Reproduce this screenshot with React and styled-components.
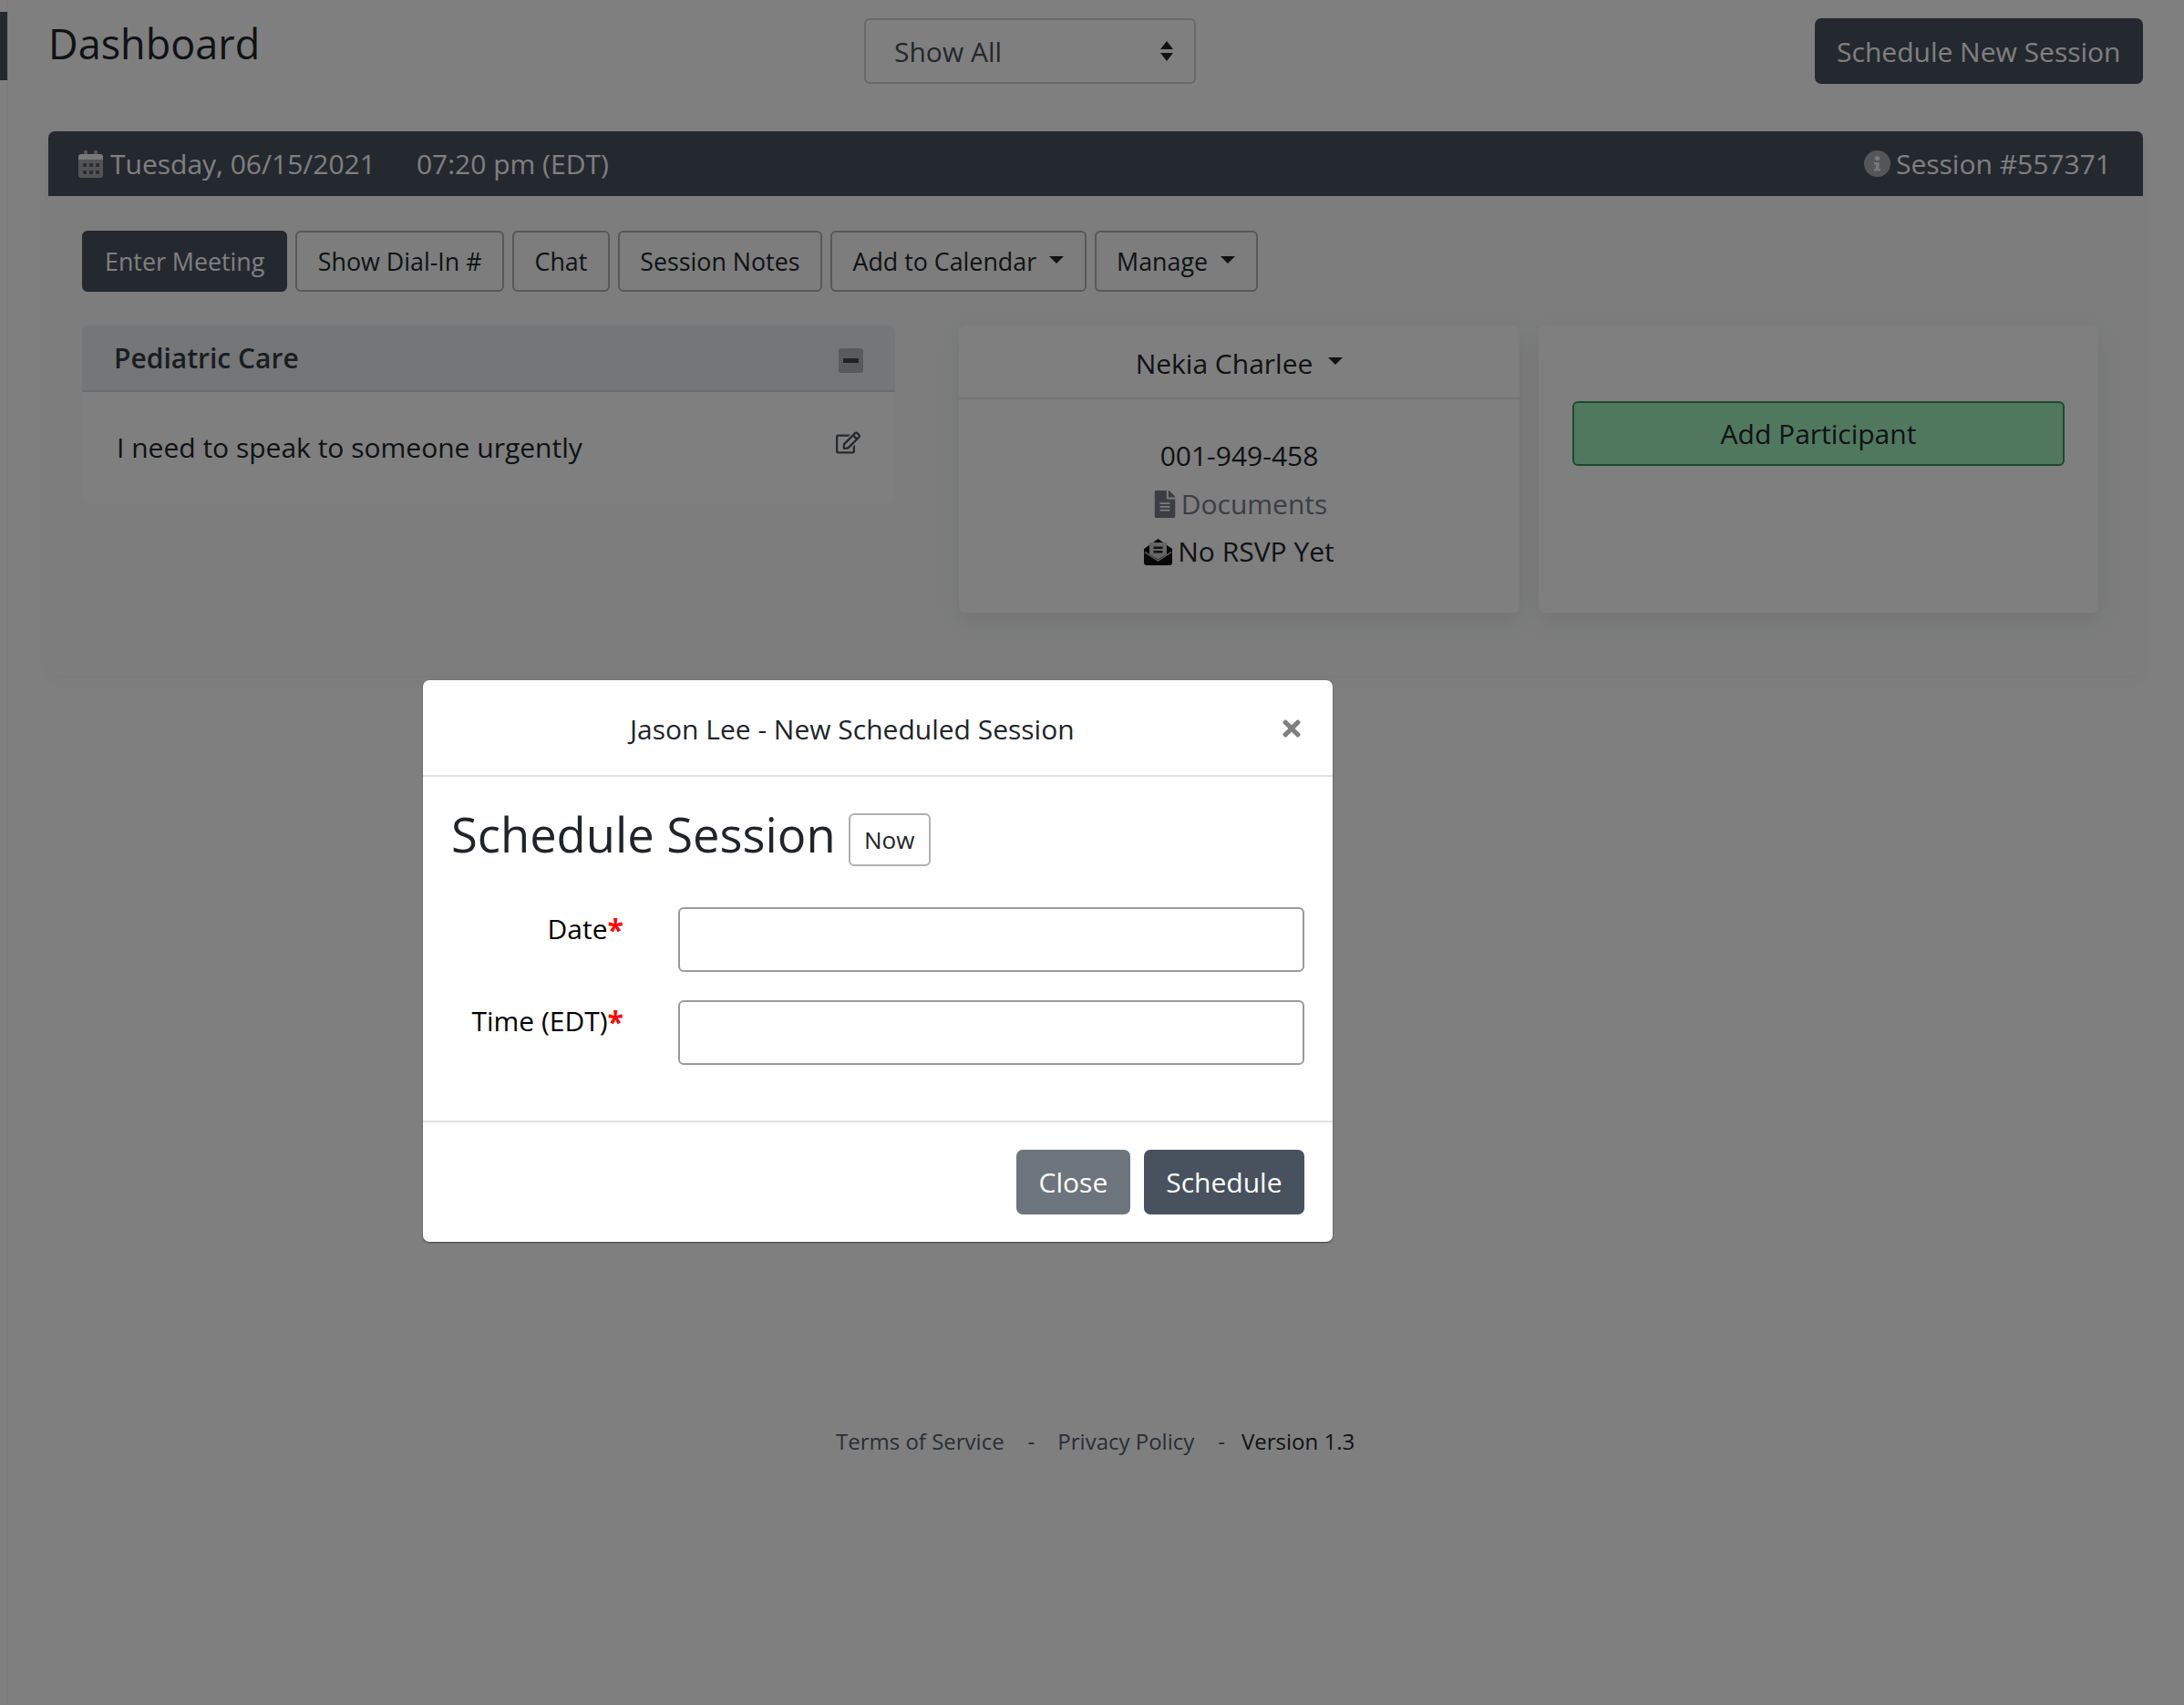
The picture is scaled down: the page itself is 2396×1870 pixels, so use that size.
import React from "react";
import styled, { createGlobalStyle } from "styled-components";
import { FaRegEdit, FaFileAlt, FaTimes } from "react-icons/fa";

const Global = createGlobalStyle`
  html, body { margin: 0; padding: 0; background: #fff; }
  body { font-family: "Open Sans", "Noto Sans", sans-serif; font-size: 28px; color: #212529; }
  * { box-sizing: border-box; }
`;

const Page = styled.div`
  position: relative;
  width: 2396px;
  height: 1870px;
  overflow: hidden;
  display: flex;
`;
const Sidebar = styled.aside`
  width: 9px;
  flex: none;
  border-right: 1px solid #f4f4f4;
  padding-top: 13px;
`;
const SideMark = styled.div`
  width: 8px;
  height: 75px;
  background: #48515e;
`;
const Main = styled.main`
  flex: 1;
  padding: 20px 44px 0 44px;
  display: flex;
  flex-direction: column;
`;
const TopBar = styled.header`
  display: grid;
  grid-template-columns: 895px 364px 1fr;
  height: 72px;
  align-items: start;
`;
const Title = styled.h1`
  margin: 0;
  font-size: 45px;
  line-height: 56px;
  font-weight: 400;
`;
const SelectBox = styled.div`
  height: 72px;
  border: 2px solid #ced4da;
  border-radius: 6px;
  display: flex;
  align-items: center;
  justify-content: space-between;
  padding: 0 23px 0 31px;
  color: #495057;
  font-size: 30px;
`;
const PrimaryBtn = styled.button`
  font: inherit;
  font-size: ${p => p.$size || 30}px;
  height: ${p => p.$h || 72}px;
  padding: 0 24.5px;
  background: #48515e;
  color: #fff;
  border: 0;
  border-radius: 7px;
  white-space: nowrap;
`;
const TopRight = styled.div`
  display: flex;
  justify-content: flex-end;
  margin-right: 1px;
`;
const Session = styled.section`
  margin-top: 52px;
  margin-right: 1px;
  background: #f8fbf9;
  border-radius: 7px;
  box-shadow: 0 4px 16px rgba(0, 0, 0, 0.06);
  height: 597px;
`;
const SessionHead = styled.div`
  height: 71px;
  background: #48515e;
  border-radius: 7px 7px 0 0;
  color: #fff;
  display: flex;
  align-items: center;
  justify-content: space-between;
  padding: 0 35px 0 33px;
  font-size: 30px;
`;
const HeadGroup = styled.div`
  display: flex;
  align-items: center;
  gap: ${p => p.$gap || 0}px;
`;
const HeadIcon = styled.span`
  display: inline-flex;
  margin-right: ${p => p.$mr || 6}px;
`;
const SessionBody = styled.div`
  padding: 38px 37px 0;
`;
const Toolbar = styled.div`
  display: flex;
  gap: 9px;
`;
const ToolBtn = styled.button`
  font: inherit;
  font-size: 26.8px;
  height: 67px;
  padding: 0 ${p => (p.$active ? 23 : 22.5)}px;
  border-radius: 6px;
  border: 2px solid ${p => (p.$active ? "#48515e" : "#aeb1b3")};
  background: ${p => (p.$active ? "#48515e" : "transparent")};
  color: ${p => (p.$active ? "#fff" : "#212529")};
  display: inline-flex;
  align-items: center;
  white-space: nowrap;
`;
const Caret = styled.span`
  display: inline-block;
  margin-left: ${p => p.$ml || 14}px;
  margin-top: -4px;
  border-top: 8px solid #212529;
  border-left: 8px solid transparent;
  border-right: 8px solid transparent;
`;
const Panels = styled.div`
  margin-top: 37px;
  display: flex;
  align-items: flex-start;
`;
const Panel = styled.div`
  background: #fff;
  border-radius: 7px;
  box-shadow: ${p => (p.$shadow ? "0 8px 26px rgba(0,0,0,0.08)" : "none")};
  width: ${p => p.$w}px;
  height: ${p => p.$h}px;
  margin-left: ${p => p.$ml || 0}px;
  flex: none;
`;
const TopicHead = styled.div`
  height: 73px;
  background: #e8ecf0;
  border-radius: 7px 7px 0 0;
  border-bottom: 2px solid #d5d8de;
  display: flex;
  align-items: center;
  justify-content: space-between;
  padding: 0 35px 0 35px;
  font-size: 30px;
  font-weight: 600;
  color: #343a40;
`;
const MinusWrap = styled.span`
  display: inline-flex;
  margin-top: 6px;
`;
const TopicBody = styled.div`
  display: flex;
  justify-content: space-between;
  align-items: flex-start;
  padding: 40px 38px 0 38px;
  font-size: 30px;
  color: #212529;
`;
const EditIcon = styled.span`
  display: inline-flex;
  margin-top: 2px;
`;
const PersonHead = styled.div`
  height: 81px;
  padding-top: 3px;
  border-bottom: 2px solid #e8e8e8;
  display: flex;
  align-items: center;
  justify-content: center;
  font-size: 30px;
`;
const PersonBody = styled.div`
  padding-top: 36px;
  display: flex;
  flex-direction: column;
  align-items: center;
  font-size: 30px;
  line-height: 52.5px;
`;
const InfoLine = styled.div`
  display: flex;
  align-items: center;
  gap: ${p => p.$gap || 7}px;
  color: ${p => p.$color || "#212529"};
`;
const AddWrap = styled.div`
  padding: 83px 37px 0;
`;
const AddBtn = styled.button`
  font: inherit;
  font-size: 30px;
  width: 100%;
  height: 71px;
  background: #a0f0be;
  border: 2px solid #3a9458;
  border-radius: 6px;
  color: #212529;
`;
const Footer = styled.footer`
  margin-top: 823px;
  padding-left: 864px;
  font-size: 24px;
  display: flex;
  white-space: pre;
  color: #212529;
`;
const FooterLink = styled.span`
  color: #525c6a;
`;
const Sep = styled.span`
  color: #48515e;
  margin: 0 ${p => p.$r}px 0 ${p => p.$l}px;
`;
const Overlay = styled.div`
  position: absolute;
  inset: 0;
  background: rgba(0, 0, 0, 0.5);
  padding: 746px 0 0 464px;
`;
const Modal = styled.div`
  width: 998px;
  height: 616px;
  background: #fff;
  border-radius: 7px;
  box-shadow: 0 1px 2px rgba(0, 0, 0, 0.5);
  display: flex;
  flex-direction: column;
`;
const ModalHead = styled.div`
  height: 106px;
  flex: none;
  border-bottom: 2px solid #dee2e6;
  display: flex;
  align-items: center;
  justify-content: space-between;
  padding: 2px 31px 0 227px;
  font-size: 30px;
`;
const CloseX = styled.span`
  display: inline-flex;
  color: #808080;
`;
const ModalBody = styled.div`
  flex: 1;
  padding: 28px 31px 0;
`;
const BodyTitle = styled.div`
  display: flex;
  align-items: flex-start;
  gap: 14px;
  height: 115px;
`;
const H2 = styled.h2`
  margin: 0;
  font-size: 52.5px;
  line-height: 70px;
  font-weight: 400;
`;
const NowBtn = styled.button`
  font: inherit;
  font-size: 26px;
  margin-top: 12px;
  width: 90px;
  height: 58px;
  border: 2px solid #aeb1b3;
  border-radius: 6px;
  background: #fff;
  color: #212529;
`;
const Field = styled.div`
  display: flex;
  align-items: flex-start;
  margin-bottom: 31px;
`;
const Label = styled.label`
  width: 189px;
  text-align: right;
  font-size: 30px;
  line-height: 42px;
  padding-top: ${p => p.$top || 3}px;
  margin-right: 60px;
  color: #000;
  white-space: nowrap;
`;
const Req = styled.span`
  color: #f00;
  font-size: 32px;
  font-weight: 700;
  line-height: 20px;
  vertical-align: -2px;
`;
const Input = styled.input`
  width: 687px;
  height: 71px;
  border: 2px solid #999;
  border-radius: 6px;
  background: #fff;
`;
const ModalFoot = styled.div`
  height: 133px;
  flex: none;
  border-top: 2px solid #dee2e6;
  display: flex;
  justify-content: flex-end;
  padding: 30px 31px 0;
  gap: 15px;
`;
const CloseBtn = styled(PrimaryBtn)`
  background: #6c757d;
`;

function UpDown() {
  return (
    <svg width="14" height="22" viewBox="0 0 14 22" aria-hidden="true">
      <path d="M7 0 L14 9 H0 Z M0 13 H14 L7 22 Z" fill="#212529" />
    </svg>
  );
}
function MinusBox() {
  return (
    <svg width="27" height="27" viewBox="0 0 27 27" aria-hidden="true">
      <rect width="27" height="27" rx="3" fill="#b0b4b8" />
      <rect x="5" y="11" width="17" height="5" fill="#3e444c" />
    </svg>
  );
}
function CalendarIcon() {
  return (
    <svg width="27" height="30" viewBox="0 0 27 30" aria-hidden="true">
      <rect x="6" y="0" width="4" height="7" rx="1" fill="#aaaaaa" />
      <rect x="17" y="0" width="4" height="7" rx="1" fill="#aaaaaa" />
      <path d="M0 10 V7 a3 3 0 0 1 3-3 H24 a3 3 0 0 1 3 3 V10 Z" fill="#f0f0f0" />
      <path d="M0 10 H27 V27 a3 3 0 0 1-3 3 H3 a3 3 0 0 1-3-3 Z" fill="#a4a6a8" />
      <g fill="#545a66">
        <rect x="5" y="14" width="4" height="4" rx="1" />
        <rect x="12" y="14" width="4" height="4" rx="1" />
        <rect x="19" y="14" width="4" height="4" rx="1" />
        <rect x="5" y="22" width="4" height="4" rx="1" />
        <rect x="12" y="22" width="4" height="4" rx="1" />
        <rect x="19" y="22" width="4" height="4" rx="1" />
      </g>
    </svg>
  );
}
function InfoIcon() {
  return (
    <svg width="29" height="29" viewBox="0 0 29 29" aria-hidden="true">
      <circle cx="14.5" cy="14.5" r="14.5" fill="#aaadb2" />
      <circle cx="14.5" cy="8.5" r="2.6" fill="#f2f2f2" />
      <path d="M11 13 H16.5 V20 H18 V22.5 H11 V20 H12.8 V15.5 H11 Z" fill="#f2f2f2" />
    </svg>
  );
}
function EnvelopeIcon() {
  return (
    <svg width="31" height="29" viewBox="0 0 31 29" aria-hidden="true">
      <path d="M15.5 0 L31 11 V26 a3 3 0 0 1-3 3 H3 a3 3 0 0 1-3-3 V11 Z" fill="#111" />
      <path d="M6 4 H25 V17 L15.5 22.5 L6 17 Z" fill="#ccc" />
      <rect x="10.5" y="8.5" width="10" height="2.5" fill="#222" />
      <rect x="10.5" y="13" width="10" height="2.5" fill="#222" />
      <path d="M1 14.5 L15.5 24 L30 14.5" fill="none" stroke="#aaa" strokeWidth="1.5" />
    </svg>
  );
}

export default function App() {
  return (
    <Page>
      <Global />
      <Sidebar><SideMark /></Sidebar>
      <Main>
        <TopBar>
          <Title>Dashboard</Title>
          <SelectBox>Show All<UpDown /></SelectBox>
          <TopRight><PrimaryBtn>Schedule New Session</PrimaryBtn></TopRight>
        </TopBar>
        <Session>
          <SessionHead>
            <HeadGroup $gap={45}>
              <HeadGroup>
                <HeadIcon $mr={8}><CalendarIcon /></HeadIcon>
                <span>Tuesday, 06/15/2021</span>
              </HeadGroup>
              <span>07:20 pm (EDT)</span>
            </HeadGroup>
            <HeadGroup>
              <HeadIcon><InfoIcon /></HeadIcon>
              <span>Session #557371</span>
            </HeadGroup>
          </SessionHead>
          <SessionBody>
            <Toolbar>
              <ToolBtn $active>Enter Meeting</ToolBtn>
              <ToolBtn>Show Dial-In #</ToolBtn>
              <ToolBtn>Chat</ToolBtn>
              <ToolBtn>Session Notes</ToolBtn>
              <ToolBtn>Add to Calendar<Caret /></ToolBtn>
              <ToolBtn>Manage<Caret /></ToolBtn>
            </Toolbar>
            <Panels>
              <Panel $w={892} $h={195}>
                <TopicHead>
                  <span>Pediatric Care</span>
                  <MinusWrap><MinusBox /></MinusWrap>
                </TopicHead>
                <TopicBody>
                  <span>I need to speak to someone urgently</span>
                  <EditIcon><FaRegEdit size={27} color="#495057" /></EditIcon>
                </TopicBody>
              </Panel>
              <Panel $w={615} $h={315} $ml={70} $shadow>
                <PersonHead>Nekia Charlee<Caret $ml={17} /></PersonHead>
                <PersonBody>
                  <InfoLine>001-949-458</InfoLine>
                  <InfoLine $color="#767d88" $gap={3}><FaFileAlt size={30} color="#767d88" />Documents</InfoLine>
                  <InfoLine $gap={6}><EnvelopeIcon />No RSVP Yet</InfoLine>
                </PersonBody>
              </Panel>
              <Panel $w={614} $h={315} $ml={21} $shadow>
                <AddWrap><AddBtn>Add Participant</AddBtn></AddWrap>
              </Panel>
            </Panels>
          </SessionBody>
        </Session>
        <Footer>
          <FooterLink>Terms of Service</FooterLink>
          <Sep $l={26} $r={25}>-</Sep>
          <FooterLink>Privacy Policy</FooterLink>
          <Sep $l={26} $r={18}>-</Sep>
          <span>Version 1.3</span>
        </Footer>
      </Main>
      <Overlay>
        <Modal>
          <ModalHead>
            <span>Jason Lee - New Scheduled Session</span>
            <CloseX><FaTimes size={28} /></CloseX>
          </ModalHead>
          <ModalBody>
            <BodyTitle>
              <H2>Schedule Session</H2>
              <NowBtn>Now</NowBtn>
            </BodyTitle>
            <Field>
              <Label>Date<Req>*</Req></Label>
              <Input />
            </Field>
            <Field>
              <Label $top={2}>Time (EDT)<Req>*</Req></Label>
              <Input />
            </Field>
          </ModalBody>
          <ModalFoot>
            <CloseBtn $h={71}>Close</CloseBtn>
            <PrimaryBtn $h={71}>Schedule</PrimaryBtn>
          </ModalFoot>
        </Modal>
      </Overlay>
    </Page>
  );
}
